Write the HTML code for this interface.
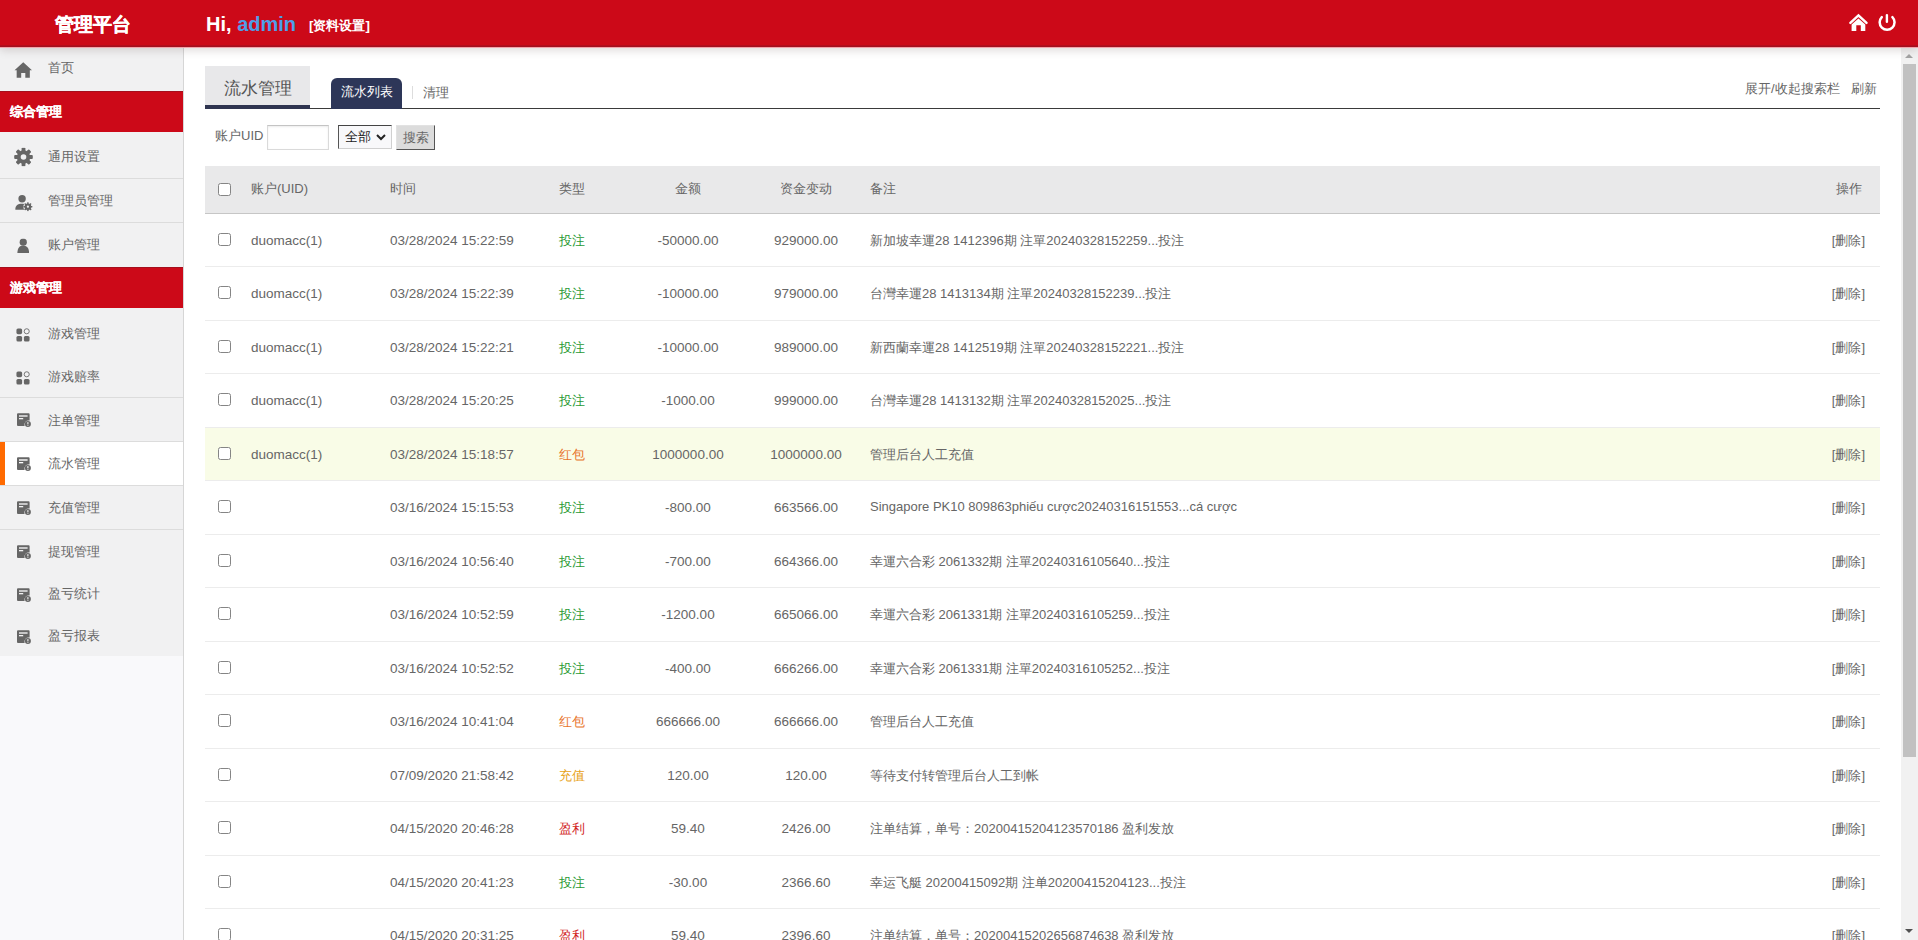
<!DOCTYPE html>
<html><head><meta charset="utf-8"><title>管理平台</title>
<style>
*{margin:0;padding:0;box-sizing:border-box}
html,body{width:1918px;height:940px;overflow:hidden;background:#fff;font-family:"Liberation Sans",sans-serif;color:#666}
#hd{position:absolute;left:0;top:0;width:1918px;height:47px;background:linear-gradient(to bottom,#cc0918 0,#cc0918 44.5px,#a60f1e 46px,#9c1020 47px);z-index:5;box-shadow:0 1px 0 #f5a2aa,0 3px 9px rgba(40,0,0,.16)}
#hd .logo{position:absolute;left:55px;top:12px;font-size:19px;font-weight:bold;color:#fff;-webkit-text-stroke:0.4px #fff}
#hd .hi{position:absolute;left:206px;top:13px;font-size:20px;font-weight:bold;color:#fff}
#hd .hi b{color:#4d9fe8}
#hd .set{position:absolute;left:309px;top:17px;font-size:13.3px;font-weight:bold;color:#fff}
#hd .icons{position:absolute;left:1848px;top:13px}
#side{position:absolute;left:0;top:0;width:184px;height:940px;background:#f9f9fb;border-right:1px solid #d6d6d6}
#sideg{position:absolute;left:0;top:47px;width:183px;height:609px;background:#f1f1f2}
.si{position:absolute;left:0;width:183px;background:#f1f1f2;--bg:#f1f1f2}
.si.act{background:#fff;--bg:#fff}
.si.act:before{content:"";position:absolute;left:0;top:0;width:5px;height:100%;background:#ff6a00}
.si .ic{position:absolute;top:50%;transform:translateY(-50%);margin-top:2px;line-height:0}
.si .lb{position:absolute;left:48px;top:50%;transform:translateY(-50%);margin-top:1px;font-size:13px;color:#666;white-space:nowrap}
.sep{position:absolute;left:0;width:183px;height:1px;background:#dcdcdc;z-index:2}
.sh{position:absolute;left:0;width:183px;height:41px;background:#cc0918;color:#fff;font-weight:bold;font-size:13px;line-height:41px;padding-left:10px;-webkit-text-stroke:0.15px #fff;box-shadow:inset 0 1px 0 #a50f1d}
#main{position:absolute;left:184px;top:47px;width:1717px;height:893px}
#sb{position:absolute;left:1901px;top:47px;width:17px;height:893px;background:#f1f1f1}
#sb .thumb{position:absolute;left:2px;top:17px;width:13px;height:693px;background:#c1c1c1}
#sb .up{position:absolute;left:4px;top:7px;width:0;height:0;border-left:4.5px solid transparent;border-right:4.5px solid transparent;border-bottom:4.5px solid #a3a3a3}
#sb .dn{position:absolute;left:4px;top:882px;width:0;height:0;border-left:4.5px solid transparent;border-right:4.5px solid transparent;border-top:4.5px solid #505050}
.tab1{position:absolute;left:205px;top:66px;width:105px;height:43px;background:#e8e8ea;border-bottom:4px solid #2f3450;font-size:17px;color:#555;line-height:45px;text-align:center}
.tline{position:absolute;left:310px;top:108px;width:1570px;height:1px;background:#3a3a3a}
.tab2{position:absolute;left:331px;top:78px;width:71px;height:31px;background:#2d3658;border-radius:6px 6px 0 0;color:#fff;font-size:13px;line-height:28px;text-align:center}
.tdiv{position:absolute;left:412px;top:86px;width:1px;height:13px;background:#ddd}
.tab3{position:absolute;left:423px;top:84px;font-size:13px;color:#666}
.rlinks{position:absolute;top:80px;font-size:13px;color:#666}
.search{position:absolute;left:215px;top:125px;height:25px}
.search .l{position:absolute;left:0;top:2px;font-size:13px;color:#666;white-space:nowrap}
.search .inp{position:absolute;left:52px;top:0;width:62px;height:25px;border:1px solid #dadada;border-top-color:#c4c4c4;background:#fff;box-shadow:inset 0 1px 2px rgba(0,0,0,.08)}
.search .sel{position:absolute;left:123px;top:0;width:54px;height:24px;border:1px solid #d0d0d0;border-top-color:#444;border-left-color:#555;background:#f8f8fa;font-size:13px;color:#222;padding-left:6px;line-height:22px}
.search .btn{position:absolute;left:181px;top:0;width:39px;height:25px;background:#dcdcdc;border:1px solid #e2e2e2;border-right-color:#555;border-bottom-color:#555;font-size:13px;color:#666;line-height:23px;text-align:center}
.th{position:absolute;left:205px;top:166px;width:1675px;height:48px;background:#e9e9ea;border-bottom:1px solid #c6c6c6}
.th .c{top:14px}
.tr{position:absolute;left:205px;width:1675px;height:53.5px;border-bottom:1px solid #ececec;background:#fff}
.tr.hl{background:#f9fce7}
.c{position:absolute;top:18px;font-size:13px;color:#666;white-space:nowrap}
.ctr{text-align:center}
.n{font-size:13.5px;top:19px}
.cb{position:absolute;top:19px;width:13px;height:13px;border:1px solid #858585;border-radius:2.5px;background:#fff}
.th .cb{top:17px}
</style></head><body>
<div id="hd">
 <div class="logo">管理平台</div>
 <div class="hi">Hi, <b>admin</b></div>
 <div class="set">[资料设置]</div>
 <svg style="position:absolute;left:1840px;top:5px" width="65" height="35" viewBox="0 0 65 35">
   <path d="M10.4 17.8 L18.45 10.4 L26.5 17.8" fill="none" stroke="#fff" stroke-width="2.5" stroke-linecap="round" stroke-linejoin="miter"/>
   <path d="M11.6 19.6 L18.45 13.4 L25.3 19.6 L25.3 26.1 L20.8 26.1 L20.8 20.3 L16.3 20.3 L16.3 26.1 L11.6 26.1 Z" fill="#fff"/>
   <path d="M41.8 12.1 A7.45 7.45 0 1 0 52.4 12.1" fill="none" stroke="#fff" stroke-width="2.5" stroke-linecap="round"/>
   <line x1="46.9" y1="10.1" x2="46.9" y2="16.7" stroke="#fff" stroke-width="2.4" stroke-linecap="round"/>
 </svg>
 </div>
</div>
<div id="side"><div id="sideg"></div>
<div class="si" style="top:47px;height:44px"><span class="ic" style="left:14px;margin-top:1px"><svg width="18.5" height="17" viewBox="0 0 18 16"><path d="M9 0.5 L0.5 8.2 L2.6 8.2 L2.6 15.5 L7 15.5 L7 10.8 L11 10.8 L11 15.5 L15.4 15.5 L15.4 8.2 L17.5 8.2 Z" fill="#666"/></svg></span><span class="lb" style="margin-top:-1px">首页</span></div>
<div class="sh" style="top:91px">综合管理</div>
<div class="si" style="top:132px;height:46px"><span class="ic" style="left:14px;margin-top:2px"><svg width="19" height="19" viewBox="0 0 19 19"><g fill="#666"><circle cx="9.5" cy="9.5" r="6.7"/><rect x="7.6" y="0.2" width="3.8" height="18.6" rx="0.9" transform="rotate(0 9.5 9.5)"/><rect x="7.6" y="0.2" width="3.8" height="18.6" rx="0.9" transform="rotate(45 9.5 9.5)"/><rect x="7.6" y="0.2" width="3.8" height="18.6" rx="0.9" transform="rotate(90 9.5 9.5)"/><rect x="7.6" y="0.2" width="3.8" height="18.6" rx="0.9" transform="rotate(135 9.5 9.5)"/></g><circle cx="9.5" cy="9.5" r="2.8" style="fill:var(--bg)"/></svg></span><span class="lb" style="margin-top:2px">通用设置</span></div><div class="sep" style="top:178px"></div>
<div class="si" style="top:178px;height:44px"><span class="ic" style="left:15px;margin-top:3px"><svg width="18" height="17" viewBox="0 0 18 17"><g fill="#666"><circle cx="7.1" cy="4.2" r="3.7"/><path d="M0.3 15.2 C0.3 11 2.5 9.3 7 9.3 C8.6 9.3 9.6 9.5 10.4 9.9 L10.4 15.2 Z"/></g><circle cx="12.9" cy="12.2" r="4.6" style="fill:var(--bg)"/><g fill="#666"><circle cx="12.9" cy="12.2" r="3.3"/><rect x="12.15" y="7.7" width="1.5" height="9" rx="0.4" transform="rotate(0 12.9 12.2)"/><rect x="12.15" y="7.7" width="1.5" height="9" rx="0.4" transform="rotate(45 12.9 12.2)"/><rect x="12.15" y="7.7" width="1.5" height="9" rx="0.4" transform="rotate(90 12.9 12.2)"/><rect x="12.15" y="7.7" width="1.5" height="9" rx="0.4" transform="rotate(135 12.9 12.2)"/></g><circle cx="12.9" cy="12.2" r="1.1" style="fill:var(--bg)"/></svg></span><span class="lb" style="margin-top:1px">管理员管理</span></div><div class="sep" style="top:222px"></div>
<div class="si" style="top:222px;height:45px"><span class="ic" style="left:16.5px;margin-top:1.5px"><svg width="12.5" height="15" viewBox="0 0 12.5 15"><g fill="#666"><circle cx="6.25" cy="3.7" r="3.6"/><path d="M0.4 14.6 C0.4 9.6 2.5 6.9 6.25 6.9 C10 6.9 12.1 9.6 12.1 14.6 Z"/></g></svg></span><span class="lb" style="margin-top:0px">账户管理</span></div>
<div class="sh" style="top:267px">游戏管理</div>
<div class="si" style="top:308px;height:48px"><span class="ic" style="left:16px;margin-top:3px"><svg width="14" height="14" viewBox="0 0 16 16"><g fill="#666"><rect x="0.5" y="0.5" width="6.5" height="6.5" rx="1.8"/><rect x="0.5" y="9" width="6.5" height="6.5" rx="1.8"/><rect x="9" y="9" width="6.5" height="6.5" rx="1.8"/></g><circle cx="12.25" cy="3.75" r="2.9" fill="none" stroke="#666" stroke-width="1"/></svg></span><span class="lb" style="margin-top:2px">游戏管理</span></div>
<div class="si" style="top:356px;height:41px"><span class="ic" style="left:16px;margin-top:1px"><svg width="14" height="14" viewBox="0 0 16 16"><g fill="#666"><rect x="0.5" y="0.5" width="6.5" height="6.5" rx="1.8"/><rect x="0.5" y="9" width="6.5" height="6.5" rx="1.8"/><rect x="9" y="9" width="6.5" height="6.5" rx="1.8"/></g><circle cx="12.25" cy="3.75" r="2.9" fill="none" stroke="#666" stroke-width="1"/></svg></span><span class="lb" style="margin-top:0px">游戏赔率</span></div><div class="sep" style="top:397px"></div>
<div class="si" style="top:397px;height:44px"><span class="ic" style="left:17px;margin-top:1px"><svg width="14" height="14" viewBox="0 0 14 14"><path d="M1 0.3 H11.6 Q12.6 0.3 12.6 1.3 V7.6 A4.2 4.2 0 0 0 7.6 12.9 H1 Q0 12.9 0 11.9 V1.3 Q0 0.3 1 0.3 Z" fill="#666"/><rect x="2" y="2.3" width="8.6" height="1.4" style="fill:var(--bg)"/><rect x="2" y="5" width="4.2" height="1.3" style="fill:var(--bg)"/><circle cx="10.9" cy="10.9" r="3" fill="#666"/><rect x="10.35" y="9.1" width="1.1" height="2.1" style="fill:var(--bg)"/><rect x="10.35" y="11.8" width="1.1" height="0.9" style="fill:var(--bg)"/></svg></span><span class="lb" style="margin-top:2px">注单管理</span></div><div class="sep" style="top:441px"></div>
<div class="si act" style="top:441px;height:44px"><span class="ic" style="left:17px;margin-top:1px"><svg width="14" height="14" viewBox="0 0 14 14"><path d="M1 0.3 H11.6 Q12.6 0.3 12.6 1.3 V7.6 A4.2 4.2 0 0 0 7.6 12.9 H1 Q0 12.9 0 11.9 V1.3 Q0 0.3 1 0.3 Z" fill="#666"/><rect x="2" y="2.3" width="8.6" height="1.4" style="fill:var(--bg)"/><rect x="2" y="5" width="4.2" height="1.3" style="fill:var(--bg)"/><circle cx="10.9" cy="10.9" r="3" fill="#666"/><rect x="10.35" y="9.1" width="1.1" height="2.1" style="fill:var(--bg)"/><rect x="10.35" y="11.8" width="1.1" height="0.9" style="fill:var(--bg)"/></svg></span><span class="lb" style="margin-top:1px">流水管理</span></div><div class="sep" style="top:485px"></div>
<div class="si" style="top:485px;height:44px"><span class="ic" style="left:17px;margin-top:1px"><svg width="14" height="14" viewBox="0 0 14 14"><path d="M1 0.3 H11.6 Q12.6 0.3 12.6 1.3 V7.6 A4.2 4.2 0 0 0 7.6 12.9 H1 Q0 12.9 0 11.9 V1.3 Q0 0.3 1 0.3 Z" fill="#666"/><rect x="2" y="2.3" width="8.6" height="1.4" style="fill:var(--bg)"/><rect x="2" y="5" width="4.2" height="1.3" style="fill:var(--bg)"/><circle cx="10.9" cy="10.9" r="3" fill="#666"/><rect x="10.35" y="9.1" width="1.1" height="2.1" style="fill:var(--bg)"/><rect x="10.35" y="11.8" width="1.1" height="0.9" style="fill:var(--bg)"/></svg></span><span class="lb" style="margin-top:1px">充值管理</span></div><div class="sep" style="top:529px"></div>
<div class="si" style="top:529px;height:44px"><span class="ic" style="left:17px;margin-top:1px"><svg width="14" height="14" viewBox="0 0 14 14"><path d="M1 0.3 H11.6 Q12.6 0.3 12.6 1.3 V7.6 A4.2 4.2 0 0 0 7.6 12.9 H1 Q0 12.9 0 11.9 V1.3 Q0 0.3 1 0.3 Z" fill="#666"/><rect x="2" y="2.3" width="8.6" height="1.4" style="fill:var(--bg)"/><rect x="2" y="5" width="4.2" height="1.3" style="fill:var(--bg)"/><circle cx="10.9" cy="10.9" r="3" fill="#666"/><rect x="10.35" y="9.1" width="1.1" height="2.1" style="fill:var(--bg)"/><rect x="10.35" y="11.8" width="1.1" height="0.9" style="fill:var(--bg)"/></svg></span><span class="lb" style="margin-top:1px">提现管理</span></div>
<div class="si" style="top:573px;height:42px"><span class="ic" style="left:17px;margin-top:1px"><svg width="14" height="14" viewBox="0 0 14 14"><path d="M1 0.3 H11.6 Q12.6 0.3 12.6 1.3 V7.6 A4.2 4.2 0 0 0 7.6 12.9 H1 Q0 12.9 0 11.9 V1.3 Q0 0.3 1 0.3 Z" fill="#666"/><rect x="2" y="2.3" width="8.6" height="1.4" style="fill:var(--bg)"/><rect x="2" y="5" width="4.2" height="1.3" style="fill:var(--bg)"/><circle cx="10.9" cy="10.9" r="3" fill="#666"/><rect x="10.35" y="9.1" width="1.1" height="2.1" style="fill:var(--bg)"/><rect x="10.35" y="11.8" width="1.1" height="0.9" style="fill:var(--bg)"/></svg></span><span class="lb" style="margin-top:0px">盈亏统计</span></div>
<div class="si" style="top:615px;height:41px"><span class="ic" style="left:17px;margin-top:1px"><svg width="14" height="14" viewBox="0 0 14 14"><path d="M1 0.3 H11.6 Q12.6 0.3 12.6 1.3 V7.6 A4.2 4.2 0 0 0 7.6 12.9 H1 Q0 12.9 0 11.9 V1.3 Q0 0.3 1 0.3 Z" fill="#666"/><rect x="2" y="2.3" width="8.6" height="1.4" style="fill:var(--bg)"/><rect x="2" y="5" width="4.2" height="1.3" style="fill:var(--bg)"/><circle cx="10.9" cy="10.9" r="3" fill="#666"/><rect x="10.35" y="9.1" width="1.1" height="2.1" style="fill:var(--bg)"/><rect x="10.35" y="11.8" width="1.1" height="0.9" style="fill:var(--bg)"/></svg></span><span class="lb" style="margin-top:0px">盈亏报表</span></div>
</div>
<div id="sb"><div class="up"></div><div class="thumb"></div><div class="dn"></div></div>
<div class="tab1">流水管理</div>
<div class="tline"></div>
<div class="tab2">流水列表</div>
<div class="tdiv"></div>
<div class="tab3">清理</div>
<div class="rlinks" style="left:1745px">展开/收起搜索栏</div>
<div class="rlinks" style="left:1851px">刷新</div>
<div class="search">
 <span class="l">账户UID</span>
 <span class="inp"></span>
 <span class="sel">全部<svg style="position:absolute;left:37px;top:8px" width="10" height="7" viewBox="0 0 10 7"><path d="M1 1 L5 5 L9 1" fill="none" stroke="#222" stroke-width="2"/></svg></span>
 <span class="btn">搜索</span>
</div>
<div class="th">
 <span class="cb" style="left:13px"></span>
 <span class="c" style="left:46px">账户(UID)</span>
 <span class="c" style="left:185px">时间</span>
 <span class="c" style="left:354px">类型</span>
 <span class="c ctr" style="left:433px;width:100px">金额</span>
 <span class="c ctr" style="left:551px;width:100px">资金变动</span>
 <span class="c" style="left:665px">备注</span>
 <span class="c" style="right:18px">操作</span>
</div>
<div class="tr" style="top:213.5px"><span class="cb" style="left:13px"></span><span class="c n" style="left:46px">duomacc(1)</span><span class="c n" style="left:185px">03/28/2024 15:22:59</span><span class="c" style="left:354px;color:#2a9a33">投注</span><span class="c ctr n" style="left:433px;width:100px">-50000.00</span><span class="c ctr n" style="left:551px;width:100px">929000.00</span><span class="c" style="left:665px">新加坡幸運28 1412396期 注單20240328152259...投注</span><span class="c" style="right:15px">[删除]</span></div>
<div class="tr" style="top:267.0px"><span class="cb" style="left:13px"></span><span class="c n" style="left:46px">duomacc(1)</span><span class="c n" style="left:185px">03/28/2024 15:22:39</span><span class="c" style="left:354px;color:#2a9a33">投注</span><span class="c ctr n" style="left:433px;width:100px">-10000.00</span><span class="c ctr n" style="left:551px;width:100px">979000.00</span><span class="c" style="left:665px">台灣幸運28 1413134期 注單20240328152239...投注</span><span class="c" style="right:15px">[删除]</span></div>
<div class="tr" style="top:320.5px"><span class="cb" style="left:13px"></span><span class="c n" style="left:46px">duomacc(1)</span><span class="c n" style="left:185px">03/28/2024 15:22:21</span><span class="c" style="left:354px;color:#2a9a33">投注</span><span class="c ctr n" style="left:433px;width:100px">-10000.00</span><span class="c ctr n" style="left:551px;width:100px">989000.00</span><span class="c" style="left:665px">新西蘭幸運28 1412519期 注單20240328152221...投注</span><span class="c" style="right:15px">[删除]</span></div>
<div class="tr" style="top:374.0px"><span class="cb" style="left:13px"></span><span class="c n" style="left:46px">duomacc(1)</span><span class="c n" style="left:185px">03/28/2024 15:20:25</span><span class="c" style="left:354px;color:#2a9a33">投注</span><span class="c ctr n" style="left:433px;width:100px">-1000.00</span><span class="c ctr n" style="left:551px;width:100px">999000.00</span><span class="c" style="left:665px">台灣幸運28 1413132期 注單20240328152025...投注</span><span class="c" style="right:15px">[删除]</span></div>
<div class="tr hl" style="top:427.5px"><span class="cb" style="left:13px"></span><span class="c n" style="left:46px">duomacc(1)</span><span class="c n" style="left:185px">03/28/2024 15:18:57</span><span class="c" style="left:354px;color:#e8742a">红包</span><span class="c ctr n" style="left:433px;width:100px">1000000.00</span><span class="c ctr n" style="left:551px;width:100px">1000000.00</span><span class="c" style="left:665px">管理后台人工充值</span><span class="c" style="right:15px">[删除]</span></div>
<div class="tr" style="top:481.0px"><span class="cb" style="left:13px"></span><span class="c n" style="left:46px"></span><span class="c n" style="left:185px">03/16/2024 15:15:53</span><span class="c" style="left:354px;color:#2a9a33">投注</span><span class="c ctr n" style="left:433px;width:100px">-800.00</span><span class="c ctr n" style="left:551px;width:100px">663566.00</span><span class="c" style="left:665px">Singapore PK10 809863phiếu cược20240316151553...cá cược</span><span class="c" style="right:15px">[删除]</span></div>
<div class="tr" style="top:534.5px"><span class="cb" style="left:13px"></span><span class="c n" style="left:46px"></span><span class="c n" style="left:185px">03/16/2024 10:56:40</span><span class="c" style="left:354px;color:#2a9a33">投注</span><span class="c ctr n" style="left:433px;width:100px">-700.00</span><span class="c ctr n" style="left:551px;width:100px">664366.00</span><span class="c" style="left:665px">幸運六合彩 2061332期 注單20240316105640...投注</span><span class="c" style="right:15px">[删除]</span></div>
<div class="tr" style="top:588.0px"><span class="cb" style="left:13px"></span><span class="c n" style="left:46px"></span><span class="c n" style="left:185px">03/16/2024 10:52:59</span><span class="c" style="left:354px;color:#2a9a33">投注</span><span class="c ctr n" style="left:433px;width:100px">-1200.00</span><span class="c ctr n" style="left:551px;width:100px">665066.00</span><span class="c" style="left:665px">幸運六合彩 2061331期 注單20240316105259...投注</span><span class="c" style="right:15px">[删除]</span></div>
<div class="tr" style="top:641.5px"><span class="cb" style="left:13px"></span><span class="c n" style="left:46px"></span><span class="c n" style="left:185px">03/16/2024 10:52:52</span><span class="c" style="left:354px;color:#2a9a33">投注</span><span class="c ctr n" style="left:433px;width:100px">-400.00</span><span class="c ctr n" style="left:551px;width:100px">666266.00</span><span class="c" style="left:665px">幸運六合彩 2061331期 注單20240316105252...投注</span><span class="c" style="right:15px">[删除]</span></div>
<div class="tr" style="top:695.0px"><span class="cb" style="left:13px"></span><span class="c n" style="left:46px"></span><span class="c n" style="left:185px">03/16/2024 10:41:04</span><span class="c" style="left:354px;color:#e8742a">红包</span><span class="c ctr n" style="left:433px;width:100px">666666.00</span><span class="c ctr n" style="left:551px;width:100px">666666.00</span><span class="c" style="left:665px">管理后台人工充值</span><span class="c" style="right:15px">[删除]</span></div>
<div class="tr" style="top:748.5px"><span class="cb" style="left:13px"></span><span class="c n" style="left:46px"></span><span class="c n" style="left:185px">07/09/2020 21:58:42</span><span class="c" style="left:354px;color:#e8a317">充值</span><span class="c ctr n" style="left:433px;width:100px">120.00</span><span class="c ctr n" style="left:551px;width:100px">120.00</span><span class="c" style="left:665px">等待支付转管理后台人工到帐</span><span class="c" style="right:15px">[删除]</span></div>
<div class="tr" style="top:802.0px"><span class="cb" style="left:13px"></span><span class="c n" style="left:46px"></span><span class="c n" style="left:185px">04/15/2020 20:46:28</span><span class="c" style="left:354px;color:#d21f1f">盈利</span><span class="c ctr n" style="left:433px;width:100px">59.40</span><span class="c ctr n" style="left:551px;width:100px">2426.00</span><span class="c" style="left:665px">注单结算，单号：20200415204123570186 盈利发放</span><span class="c" style="right:15px">[删除]</span></div>
<div class="tr" style="top:855.5px"><span class="cb" style="left:13px"></span><span class="c n" style="left:46px"></span><span class="c n" style="left:185px">04/15/2020 20:41:23</span><span class="c" style="left:354px;color:#2a9a33">投注</span><span class="c ctr n" style="left:433px;width:100px">-30.00</span><span class="c ctr n" style="left:551px;width:100px">2366.60</span><span class="c" style="left:665px">幸运飞艇 20200415092期 注单20200415204123...投注</span><span class="c" style="right:15px">[删除]</span></div>
<div class="tr" style="top:909.0px"><span class="cb" style="left:13px"></span><span class="c n" style="left:46px"></span><span class="c n" style="left:185px">04/15/2020 20:31:25</span><span class="c" style="left:354px;color:#d21f1f">盈利</span><span class="c ctr n" style="left:433px;width:100px">59.40</span><span class="c ctr n" style="left:551px;width:100px">2396.60</span><span class="c" style="left:665px">注单结算，单号：20200415202656874638 盈利发放</span><span class="c" style="right:15px">[删除]</span></div>
</body></html>
